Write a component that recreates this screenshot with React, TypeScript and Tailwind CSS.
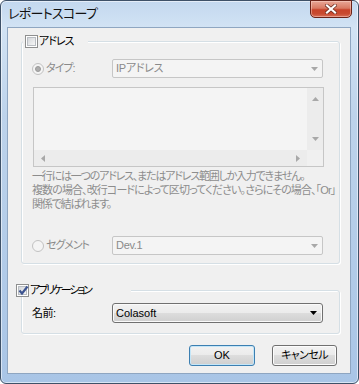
import React from "react";

const JP = "[font-family:'Liberation_Sans','Noto_Sans_CJK_JP',sans-serif] [font-feature-settings:'palt']";

function DownTri({ color }: { color: string }) {
  return (
    <svg width="7" height="4" viewBox="0 0 7 4">
      <path d="M0 0H7L3.5 4Z" fill={color} />
    </svg>
  );
}

function CheckBox({ checked }: { checked?: boolean }) {
  return (
    <div className="w-[13px] h-[13px] border border-[#8e8f8f] bg-white p-px shrink-0">
      <div className="relative w-full h-full border border-[#b9bdc2] bg-[linear-gradient(135deg,#d4d7db,#f6f6f6)]">
        {checked && (
          <svg className="absolute -left-[2px] -top-[3px]" width="13" height="13" viewBox="0 0 13 13">
            <path d="M2.5 6.5L5 9.5L10.5 2.5" stroke="#3d5490" strokeWidth="2.2" fill="none" strokeLinejoin="miter" />
          </svg>
        )}
      </div>
    </div>
  );
}

function Radio({ selected }: { selected?: boolean }) {
  return (
    <div className="w-[12px] h-[12px] rounded-full border border-[#c2c2c2] bg-[#f4f4f4] flex items-center justify-center shrink-0">
      {selected && <div className="w-[6px] h-[6px] rounded-full bg-[#adadad] border border-[#9a9a9a]" />}
    </div>
  );
}

function DisabledCombo({ text }: { text: string }) {
  return (
    <div className="w-[211px] h-[19px] rounded-[2px] border border-[#c6c6c6] bg-[#f4f4f4] flex items-center justify-between pl-[3px] pr-[4px]">
      <span className="text-[11px] leading-none text-[#8a8a8a] tracking-[-0.3px]">{text}</span>
      <DownTri color="#a8a8a8" />
    </div>
  );
}

export default function App() {
  return (
    <div className={`w-[359px] h-[384px] ${JP} text-[12px] text-black bg-white`}>
      <div className="w-[359px] h-[384px] rounded-[6px] border border-[#3e5168] bg-[linear-gradient(180deg,#c3d8ef_0%,#d2e3f4_7%,#bdd3eb_30%,#a9c5e6_100%)] shadow-[inset_0_0_0_1px_rgba(255,255,255,0.55)] flex flex-col">
        {/* Title bar */}
        <div className="h-[26px] flex justify-between">
          <div className="pl-[7px] h-[26px] flex items-center text-[13px] tracking-[-0.7px] text-[#111]">レポートスコープ</div>
          <div className="mr-[6px] w-[42px] h-[18px] -mt-px rounded-b-[5px] border border-[#6b2318] bg-[linear-gradient(180deg,#e9a797_0%,#d97a63_45%,#c8432a_55%,#c84b30_80%,#d9705a_100%)] shadow-[inset_0_0_0_1px_rgba(255,220,210,0.45)] flex items-center justify-center">
            <svg width="12" height="10" viewBox="0 0 12 10">
              <path d="M2 1.5L10 8.5M10 1.5L2 8.5" stroke="#6b2a1e" strokeWidth="3.6" strokeLinecap="square" />
              <path d="M2 1.5L10 8.5M10 1.5L2 8.5" stroke="#ffffff" strokeWidth="2.2" strokeLinecap="square" />
            </svg>
          </div>
        </div>

        {/* Client area */}
        <div className="ml-[6px] w-[344px] h-[347px] border border-[#8fa6c1] bg-[#f0f0f0] flex flex-col pl-[13px] pt-[13px]">
          {/* Group 1 */}
          <div className="relative w-[319px] rounded-[3px] border border-[#d5dfe5] shadow-[inset_1px_1px_0_#fff,1px_1px_0_#fff] flex flex-col pt-[17px] pb-[8px]">
            <div className="absolute -top-[8px] left-[1px] h-[14px] bg-[#f0f0f0] pl-[2px] pr-[14px] flex items-center gap-[1px]">
              <CheckBox />
              <span className="text-[11px] leading-none tracking-[-1px]">アドレス</span>
            </div>

            <div className="h-[19px] flex items-center pl-[10px]">
              <div className="w-[80px] flex items-center gap-[2px] text-[#8a8a8a]">
                <Radio selected />
                <span className="text-[11px] leading-none tracking-[-1px]">タイプ:</span>
              </div>
              <DisabledCombo text="IPアドレス" />
            </div>

            <div className="ml-[11px] mt-[9px] w-[291px] h-[80px] border border-[#c6c6c6] bg-[#f4f4f4] flex flex-col">
              <div className="flex-1 flex">
                <div className="flex-1" />
                <div className="w-[16px] bg-[#ececec] flex flex-col items-center justify-between py-[9px]">
                  <svg width="7" height="4" viewBox="0 0 7 4"><path d="M0 4H7L3.5 0Z" fill="#a8a8a8" /></svg>
                  <DownTri color="#a8a8a8" />
                </div>
              </div>
              <div className="h-[16px] flex">
                <div className="flex-1 bg-[#ececec] flex items-center justify-between px-[7px]">
                  <svg width="4" height="7" viewBox="0 0 4 7"><path d="M4 0V7L0 3.5Z" fill="#a8a8a8" /></svg>
                  <svg width="4" height="7" viewBox="0 0 4 7"><path d="M0 0V7L4 3.5Z" fill="#a8a8a8" /></svg>
                </div>
                <div className="w-[16px] bg-[#f0f0f0]" />
              </div>
            </div>

            <div className="mt-[2px] pl-[10px] text-[11px] leading-[14px] text-[#8d8d8d] whitespace-nowrap">
              <div className="tracking-[-1.2px]">一行には一つのアドレス、またはアドレス範囲しか入力できません。</div>
              <div className="tracking-[-0.9px]">複数の場合、改行コードによって区切ってください。さらにその場合、「Or」</div>
              <div className="tracking-[-1.2px]">関係で結ばれます。</div>
            </div>

            <div className="mt-[25px] h-[19px] flex items-center pl-[10px]">
              <div className="w-[80px] flex items-center gap-[2px] text-[#8a8a8a]">
                <Radio />
                <span className="text-[11px] leading-none tracking-[-1.1px]">セグメント</span>
              </div>
              <DisabledCombo text="Dev.1" />
            </div>
          </div>

          {/* Group 2 */}
          <div className="relative mt-[26px] w-[319px] rounded-[3px] border border-[#d5dfe5] shadow-[inset_1px_1px_0_#fff,1px_1px_0_#fff] flex flex-col pt-[12px] pb-[10px]">
            <div className="absolute -top-[8px] -left-[6px] h-[14px] bg-[#f0f0f0] pr-[40px] flex items-center gap-[1px]">
              <CheckBox checked />
              <span className="text-[11px] leading-none tracking-[-2.2px]">アプリケーション</span>
            </div>
            <div className="h-[20px] flex items-center pl-[10px]">
              <div className="w-[80px] text-[11px] leading-none tracking-[-0.5px]">名前:</div>
              <div className="w-[211px] h-[20px] rounded-[3px] border border-[#707070] bg-[linear-gradient(180deg,#f2f2f2_0%,#ebebeb_50%,#dddddd_50%,#cfcfcf_100%)] shadow-[inset_0_0_0_1px_#fafafa] flex items-center justify-between pl-[3px] pr-[5px]">
                <span className="text-[11px] leading-none">Colasoft</span>
                <DownTri color="#000" />
              </div>
            </div>
          </div>

          {/* Buttons */}
          <div className="mt-[11px] w-[316px] flex justify-end gap-[17px]">
            <button className="w-[66px] h-[21px] rounded-[3px] border border-[#3c7fb1] bg-[linear-gradient(180deg,#f2f2f2_0%,#ebebeb_50%,#dddddd_50%,#cfcfcf_100%)] shadow-[inset_0_0_0_1px_#c4e6f8] text-[11px] leading-none flex items-center justify-center">
              OK
            </button>
            <button className="w-[65px] h-[21px] rounded-[3px] border border-[#707070] bg-[linear-gradient(180deg,#f2f2f2_0%,#ebebeb_50%,#dddddd_50%,#cfcfcf_100%)] shadow-[inset_0_0_0_1px_#fcfcfc] text-[11px] leading-none tracking-[-0.6px] flex items-center justify-center">
              キャンセル
            </button>
          </div>
        </div>
      </div>
    </div>
  );
}
